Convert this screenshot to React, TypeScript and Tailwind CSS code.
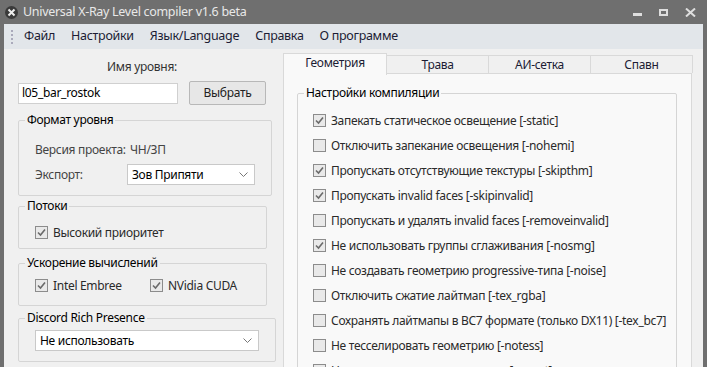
import React from 'react';

const FONT = "font-['Noto_Sans','Open_Sans',sans-serif] tracking-[-0.3px]";

const Check: React.FC<{ on?: boolean }> = ({ on }) => (
    <span className="w-[13px] h-[13px] border border-[#8c8c8c] bg-[#e9e9e9] flex items-center justify-center shrink-0">
        {on && (
            <svg width="9" height="9" viewBox="0 0 9 9">
                <path d="M1 4.5 L3.5 7 L8 1.5" fill="none" stroke="#6a6a6a" strokeWidth="1.6" />
            </svg>
        )}
    </span>
);

const CheckRow: React.FC<{ on?: boolean; label: string; className?: string }> = ({ on, label, className }) => (
    <div className={`flex items-center gap-[5px] h-[25px] whitespace-nowrap ${className ?? ''}`}>
        <Check on={on} />
        <span className="text-[#2a2a2a]">{label}</span>
    </div>
);

const Group: React.FC<{ title: string; className?: string; children: React.ReactNode }> = ({ title, className, children }) => (
    <fieldset className={`border border-[#d5d5d5] rounded-[2px] px-[16px] ${className ?? ''}`}>
        <legend className="px-[2px] ml-[-10px] text-black leading-[14px]">{title}</legend>
        {children}
    </fieldset>
);

const Select: React.FC<{ value: string; className?: string }> = ({ value, className }) => (
    <div className={`h-[21px] bg-white border border-[#c9c9c9] flex items-center justify-between pl-[4px] pr-[6px] ${className ?? ''}`}>
        <span className="text-black">{value}</span>
        <svg width="9" height="5" viewBox="0 0 9 5">
            <path d="M0.5 0.5 L4.5 4.5 L8.5 0.5" fill="none" stroke="#777" strokeWidth="1" />
        </svg>
    </div>
);

const compile = [
    { on: true, label: 'Запекать статическое освещение [-static]' },
    { on: false, label: 'Отключить запекание освещения [-nohemi]' },
    { on: true, label: 'Пропускать отсутствующие текстуры [-skipthm]' },
    { on: true, label: 'Пропускать invalid faces [-skipinvalid]' },
    { on: false, label: 'Пропускать и удалять invalid faces [-removeinvalid]' },
    { on: true, label: 'Не использовать группы сглаживания [-nosmg]' },
    { on: false, label: 'Не создавать геометрию progressive-типа [-noise]' },
    { on: false, label: 'Отключить сжатие лайтмап [-tex_rgba]' },
    { on: false, label: 'Сохранять лайтмапы в BC7 формате (только DX11) [-tex_bc7]' },
    { on: false, label: 'Не тесселировать геометрию [-notess]' },
    { on: false, label: 'Не оптимизировать геометрию [-noopt]' },
];

const tabs = ['Геометрия', 'Трава', 'АИ-сетка', 'Спавн'];
const menu = ['Файл', 'Настройки', 'Язык/Language', 'Справка', 'О программе'];

export default function App() {
    return (
        <div className={`w-[707px] h-[367px] bg-[#6f6f6f] flex flex-col overflow-hidden text-[12px] ${FONT}`}>
            {/* title bar */}
            <div className="h-[24px] flex items-center pl-[5px] pr-[11px] shrink-0">
                <svg width="13" height="13" viewBox="0 0 13 13">
                    <circle cx="6.5" cy="6.5" r="6.5" fill="#3a3a3a" />
                    <path d="M3.5 3.5 L9.5 9.5 M9.5 3.5 L3.5 9.5" stroke="#eee" strokeWidth="2" />
                </svg>
                <span className="ml-[5px] text-[#e8e8e8] text-[12.5px]">Universal X-Ray Level compiler v1.6 beta</span>
                <div className="ml-auto flex items-center gap-[17px]">
                    <span className="w-[9px] h-[3px] bg-[#dedede] mt-[4px]" />
                    <span className="w-[9px] h-[7px] border-2 border-[#dedede]" />
                    <svg width="11" height="9" viewBox="0 0 11 9">
                        <path d="M1 0.5 L10 8.5 M10 0.5 L1 8.5" stroke="#dedede" strokeWidth="2" />
                    </svg>
                </div>
            </div>

            <div className="flex-1 mx-[4px] bg-[#f0f0f0] flex flex-col">
                {/* menu */}
                <div className="h-[25px] bg-[#e2e6ea] flex items-center shrink-0">
                    <div className="flex flex-col gap-[2px] ml-[7px] mr-[11px]">
                        {[0, 1, 2, 3].map(i => <span key={i} className="w-[2px] h-[2px] bg-[#aab]" />)}
                    </div>
                    <div className="flex gap-[16px] text-[12.5px] text-[#1c1c34]">
                        {menu.map(m => <span key={m}>{m}</span>)}
                    </div>
                </div>

                <div className="flex flex-1">
                    {/* left column */}
                    <div className="w-[279px] pl-[14px] shrink-0">
                        <div className="w-[248px] text-center mt-[9px] h-[18px] text-[#333]">Имя уровня:</div>
                        <div className="flex items-center gap-[11px] mt-[5px]">
                            <div className="w-[160px] h-[21px] bg-white border border-[#d0d0d0] flex items-center pl-[3px] text-black">l05_bar_rostok</div>
                            <div className="w-[77px] h-[24px] border border-[#b8b8b8] rounded-[2px] bg-[#e7e7e7] flex items-center justify-center text-[#222]">Выбрать</div>
                        </div>

                        <Group title="Формат уровня" className="w-[249px] h-[83px] mt-[8px]">
                            <div className="flex items-center h-[16px] mt-[15px] text-[#444] whitespace-nowrap">
                                <span className="w-[95px] shrink-0">Версия проекта:</span>
                                <span>ЧН/ЗП</span>
                            </div>
                            <div className="flex items-center mt-[6px]">
                                <span className="w-[92px] text-[#444]">Экспорт:</span>
                                <Select value="Зов Припяти" className="w-[128px]" />
                            </div>
                        </Group>

                        <Group title="Потоки" className="w-[249px] h-[50px] mt-[3px]">
                            <CheckRow on label="Высокий приоритет" className="mt-[7px]" />
                        </Group>

                        <Group title="Ускорение вычислений" className="w-[249px] h-[50px] mt-[7px]">
                            <div className="flex">
                                <CheckRow on label="Intel Embree" className="w-[115px] mt-[3px]" />
                                <CheckRow on label="NVidia CUDA" className="mt-[3px]" />
                            </div>
                        </Group>

                        <Group title="Discord Rich Presence" className="w-[249px] h-[51px] mt-[5px]">
                            <Select value="Не использовать" className="w-[224px] mt-[5px]" />
                        </Group>
                    </div>

                    {/* right column */}
                    <div className="flex-1 pt-[4px] flex flex-col">
                        <div className="flex items-end h-[20px]">
                            {tabs.map((t, i) => (
                                <div
                                    key={t}
                                    className={
                                        i === 0
                                            ? 'w-[104px] h-[22px] mb-[-2px] bg-[#f9f9f9] border border-b-0 border-[#d9d9d9] text-center text-[#1c1c34] leading-[18px] relative z-10'
                                            : 'w-[102px] h-[18px] bg-[#f0f0f0] border border-b-0 border-l-0 border-[#d9d9d9] text-center text-[#1c1c34] leading-[18px]'
                                    }
                                >
                                    {t}
                                </div>
                            ))}
                        </div>
                        <div className="w-[409px] flex-1 bg-[#f9f9f9] border border-[#d9d9d9] border-b-0 pl-[13px] pt-[12px] overflow-hidden">
                            <fieldset className="w-[380px] h-[400px] border border-[#d5d5d5] rounded-[2px] pl-[15px]">
                                <legend className="px-[2px] ml-[-9px] text-black leading-[14px]">Настройки компиляции</legend>
                                <div className="mt-[8px]">
                                    {compile.map(c => <CheckRow key={c.label} on={c.on} label={c.label} />)}
                                </div>
                            </fieldset>
                        </div>
                    </div>
                </div>
            </div>
        </div>
    );
}
